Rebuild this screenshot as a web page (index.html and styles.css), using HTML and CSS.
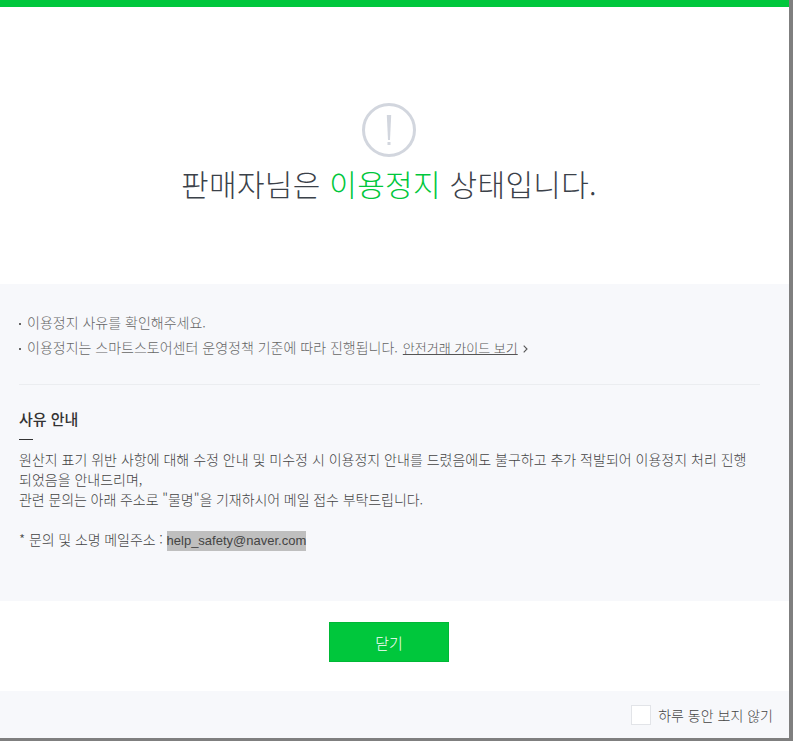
FILE: index.html
```html
<!DOCTYPE html>
<html lang="ko">
<head>
<meta charset="utf-8">
<title>이용정지 안내</title>
<link rel="stylesheet" href="styles.css">
</head>
<body>
<div class="modal">
  <header class="hero">
    <svg class="alert" width="56" height="56" viewBox="0 0 56 56" aria-hidden="true">
      <circle cx="28" cy="28" r="25.5" fill="none" stroke="#d2d6de" stroke-width="3"/>
      <path d="M25.8 13h4.4l-1.2 25h-2z" fill="#d2d6de"/>
      <rect x="26.5" y="40" width="3" height="3" fill="#d2d6de"/>
    </svg>
    <h1 class="title">판매자님은 <em class="accent">이용정지</em> 상태입니다.</h1>
  </header>
  <section class="info">
    <ul class="notes">
      <li class="note">이용정지 사유를 확인해주세요.</li>
      <li class="note">이용정지는 스마트스토어센터 운영정책 기준에 따라 진행됩니다. <a class="guide" href="#">안전거래 가이드 보기</a><svg class="chev" width="5" height="8" viewBox="0 0 5 8" aria-hidden="true"><path d="M.7.7 4 4 .7 7.3" fill="none" stroke="#555" stroke-width="1.1"/></svg></li>
    </ul>
    <h2 class="reason-title">사유 안내</h2>
    <p class="reason">원산지 표기 위반 사항에 대해 수정 안내 및 미수정 시 이용정지 안내를 드렸음에도 불구하고 추가 적발되어 이용정지 처리 진행<br>되었음을 안내드리며,<br><span class="tight">관련 문의는 아래 주소로 "물명"을 기재하시어 메일 접수 부탁드립니다.</span><br><br><span class="tight">* 문의 및 소명 메일주소 : </span><mark class="mail">help_safety@naver.com</mark></p>
  </section>
  <div class="actions"><button class="close" type="button">닫기</button></div>
  <footer class="foot">
    <label class="skip"><span class="box"></span>하루 동안 보지 않기</label>
  </footer>
</div>
</body>
</html>
```
FILE: styles.css
```css
* { box-sizing: border-box; }
html, body { margin: 0; height: 100%; }
body {
  background: #7f7f7f;
  font-family: "Noto Sans CJK KR", "Liberation Sans", sans-serif;
  color: #444;
  overflow: hidden;
}
.modal {
  width: 789px;
  height: 738px;
  background: #fff;
  border-top: 7px solid #00c73c;
  display: flex;
  flex-direction: column;
}
.hero {
  height: 277px;
  padding: 95px 11px 0 0;
  display: flex;
  flex-direction: column;
  align-items: center;
}
.alert { display: block; }
.title {
  margin: 3px 0 0;
  font-size: 30px;
  line-height: 44px;
  font-weight: 300;
  letter-spacing: 0.3px;
  color: #3b4149;
}
.accent { font-style: normal; color: #00c73c; }
.info {
  height: 317px;
  background: #f7f8fb;
  padding: 26px 29px 0 19px;
}
.notes {
  list-style: none;
  margin: 0;
  padding: 0 0 24px;
  border-bottom: 1px solid #ebedf0;
}
.note {
  position: relative;
  padding-left: 8px;
  font-size: 14px;
  font-weight: 300;
  line-height: 25px;
  color: #666;
}
.note::before {
  content: "";
  position: absolute;
  left: 0;
  top: 13px;
  width: 2px;
  height: 2px;
  background: #666;
}
.guide { font-size: 13px; color: #555; text-decoration: underline; margin-left: 1px; }
.chev { margin-left: 5px; }
.reason-title {
  margin: 24px 0 0;
  padding-bottom: 11px;
  font-size: 15px;
  line-height: 20px;
  font-weight: 500;
  color: #333;
  position: relative;
}
.reason-title::after {
  content: "";
  position: absolute;
  left: 0;
  bottom: 0;
  width: 14px;
  height: 1px;
  background: #333;
}
.reason {
  margin: 9px 0 0;
  font-size: 14px;
  font-weight: 300;
  line-height: 20px;
  color: #444;
}
.tight { letter-spacing: -0.06px; word-spacing: -0.1px; }
.mail {
  display: inline-block;
  background: #bfbfbf;
  color: #444;
  font: 400 13px/20px "Liberation Sans", sans-serif;
}
.actions {
  height: 90px;
  padding: 21px 11px 0 0;
  display: flex;
  justify-content: center;
}
.close {
  width: 120px;
  height: 40px;
  border: 1px solid #00b836;
  background: #00c73c;
  color: #fff;
  font: 300 15px "Noto Sans CJK KR", sans-serif;
}
.foot {
  flex: 1;
  background: #f7f8fb;
  display: flex;
  justify-content: flex-end;
  align-items: center;
  padding-right: 16px;
}
.skip {
  display: flex;
  align-items: center;
  font-size: 14px;
  font-weight: 300;
  color: #444;
}
.box {
  width: 20px;
  height: 20px;
  margin-right: 7px;
  background: #fff;
  border: 1px solid #e2e4e8;
}
```
